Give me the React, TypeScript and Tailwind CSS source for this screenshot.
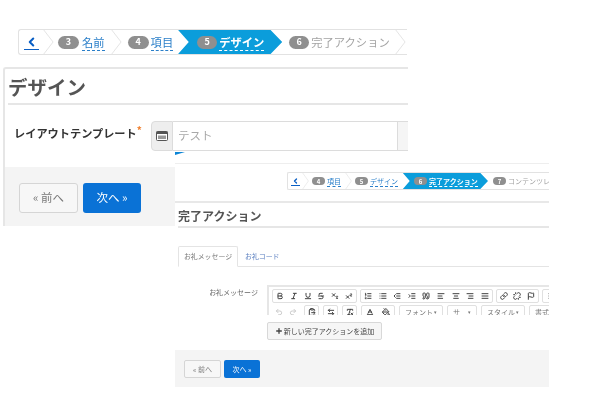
import {
  AlignCenter,
  AlignJustify,
  AlignLeft,
  AlignRight,
  ArrowLeftRight,
  Baseline,
  Bold,
  ChevronLeft,
  ClipboardPaste,
  Flag,
  Indent,
  Italic,
  Link,
  List,
  ListOrdered,
  Outdent,
  PaintBucket,
  Plus,
  Quote,
  Redo2,
  RemoveFormatting,
  Strikethrough,
  Subscript,
  Superscript,
  Underline,
  Undo2,
  Unlink,
} from "lucide-react";
import type { ComponentType } from "react";

const FONT = "font-['Noto_Sans_CJK_JP','Noto_Sans',sans-serif]";

type IconType = ComponentType<{ size?: number; strokeWidth?: number; className?: string }>;

function Chevron({ className }: { className: string }) {
  return (
    <svg className={className} viewBox="0 0 12 26" fill="none" preserveAspectRatio="none">
      <path d="M0 0 L11 13 L0 26" stroke="#e3e3e3" strokeWidth="1" />
    </svg>
  );
}

function LargeSteps() {
  return (
    <div className="ml-[18px] flex h-[26px] w-[389px] items-center overflow-hidden rounded-l-[3px] border-y border-l border-[#e2e2e2] text-[11.3px]">
      <div className="flex w-[24px] shrink-0 justify-center">
        <ChevronLeft size={15} strokeWidth={3.5} className="border-b border-[#0a5fc4] text-[#0a5fc4]" />
      </div>
      <Chevron className="h-[26px] w-[11px] shrink-0" />
      <div className="ml-[4px] flex shrink-0 items-center">
        <span className="mr-[3px] flex h-[13px] w-[21px] items-center justify-center rounded-full bg-[#8f8f8f] text-[9px] font-bold text-white">3</span>
        <span className="border-b border-dashed border-[#2a7fc9] leading-[16px] text-[#2a7fc9]">名前</span>
      </div>
      <Chevron className="ml-[6px] h-[26px] w-[11px] shrink-0" />
      <div className="ml-[6px] flex shrink-0 items-center">
        <span className="mr-[2px] flex h-[13px] w-[21px] items-center justify-center rounded-full bg-[#8f8f8f] text-[9px] font-bold text-white">4</span>
        <span className="border-b border-dashed border-[#2a7fc9] leading-[16px] text-[#2a7fc9]">項目</span>
      </div>
      <div className="ml-[4px] flex h-[26px] w-[105px] shrink-0 items-center bg-[#0b9ddb] pl-[20px] [clip-path:polygon(0_0,88%_0,100%_50%,88%_100%,0_100%,11%_50%)]">
        <span className="mr-[2px] flex h-[13px] w-[20px] items-center justify-center rounded-full bg-[#8f8f8f] text-[9px] font-bold text-white">5</span>
        <span className="border-b border-dashed border-white font-bold leading-[16px] text-white">デザイン</span>
      </div>
      <div className="ml-[7px] flex shrink-0 items-center">
        <span className="mr-[2px] flex h-[13px] w-[20px] items-center justify-center rounded-full bg-[#8f8f8f] text-[9px] font-bold text-white">6</span>
        <span className="whitespace-nowrap leading-[16px] text-[#a3a3a3]">完了アクション</span>
      </div>
      <Chevron className="ml-[5px] h-[26px] w-[11px] shrink-0" />
    </div>
  );
}

function SmallSteps() {
  return (
    <div className="ml-[112px] flex h-[18px] w-[262px] items-center overflow-hidden rounded-l-[2px] border-y border-l border-[#e2e2e2] text-[7px]">
      <div className="flex w-[14px] shrink-0 justify-center">
        <ChevronLeft size={9} strokeWidth={4} className="border-b border-[#0a5fc4] text-[#0a5fc4]" />
      </div>
      <Chevron className="h-[18px] w-[7px] shrink-0" />
      <div className="ml-[3px] flex shrink-0 items-center">
        <span className="mr-[2px] flex h-[8px] w-[13px] items-center justify-center rounded-full bg-[#8f8f8f] text-[6px] font-bold text-white">4</span>
        <span className="border-b border-dashed border-[#2a7fc9] leading-[10px] text-[#2a7fc9]">項目</span>
      </div>
      <Chevron className="ml-[4px] h-[18px] w-[7px] shrink-0" />
      <div className="ml-[3px] flex shrink-0 items-center">
        <span className="mr-[2px] flex h-[8px] w-[13px] items-center justify-center rounded-full bg-[#8f8f8f] text-[6px] font-bold text-white">5</span>
        <span className="border-b border-dashed border-[#2a7fc9] leading-[10px] text-[#2a7fc9]">デザイン</span>
      </div>
      <div className="ml-[4px] flex h-[18px] w-[86px] shrink-0 items-center bg-[#0b9ddb] pl-[12px] [clip-path:polygon(0_0,90%_0,100%_50%,90%_100%,0_100%,9%_50%)]">
        <span className="mr-[2px] flex h-[8px] w-[13px] items-center justify-center rounded-full bg-[#8f8f8f] text-[6px] font-bold text-white">6</span>
        <span className="whitespace-nowrap border-b border-dashed border-white font-bold leading-[10px] text-white">完了アクション</span>
      </div>
      <div className="ml-[5px] flex shrink-0 items-center">
        <span className="mr-[2px] flex h-[8px] w-[13px] items-center justify-center rounded-full bg-[#8f8f8f] text-[6px] font-bold text-white">7</span>
        <span className="whitespace-nowrap leading-[10px] text-[#a3a3a3]">コンテンツレ</span>
      </div>
    </div>
  );
}

function ToolGroup({ icons, className }: { icons: IconType[]; className: string }) {
  return (
    <div className={`flex h-[14px] shrink-0 items-center justify-around rounded-[2px] border border-[#e0e0e0] bg-white ${className}`}>
      {icons.map((Icon, i) => (
        <Icon key={i} size={8} strokeWidth={3} className="text-[#444]" />
      ))}
    </div>
  );
}

function ToolSelect({ label, className }: { label: string; className: string }) {
  return (
    <div className={`flex h-[14px] shrink-0 items-center justify-between rounded-[2px] border border-[#e0e0e0] bg-white px-[5px] text-[7px] text-[#777] ${className}`}>
      <span className="whitespace-nowrap">{label}</span>
      <span className="text-[5px]">▾</span>
    </div>
  );
}

function Toolbar() {
  return (
    <div className="ml-[9px] h-[30px] w-[282px] overflow-hidden border-l-2 border-t-2 border-[#e6e6e6] pl-[3px] pt-[2px]">
      <div className="flex w-[300px] gap-[3px]">
        <ToolGroup icons={[Bold, Italic, Underline, Strikethrough, Subscript, Superscript]} className="w-[85px]" />
        <ToolGroup
          icons={[ListOrdered, List, Outdent, Indent, Quote, AlignLeft, AlignCenter, AlignRight, AlignJustify]}
          className="w-[133px]"
        />
        <ToolGroup icons={[Link, Unlink, Flag]} className="w-[43px]" />
        <ToolGroup icons={[List]} className="w-[20px]" />
      </div>
      <div className="mt-[2px] flex w-[300px] gap-[4px]">
        <div className="flex w-[28px] shrink-0 items-center justify-around">
          <Undo2 size={8} strokeWidth={3} className="text-[#ccc]" />
          <Redo2 size={8} strokeWidth={3} className="text-[#ccc]" />
        </div>
        <ToolGroup icons={[ClipboardPaste]} className="w-[15px]" />
        <ToolGroup icons={[ArrowLeftRight]} className="w-[15px]" />
        <ToolGroup icons={[RemoveFormatting]} className="w-[15px]" />
        <ToolGroup icons={[Baseline, PaintBucket]} className="w-[34px]" />
        <ToolSelect label="フォント" className="w-[44px]" />
        <ToolSelect label="サ" className="w-[30px]" />
        <ToolSelect label="スタイル" className="w-[44px]" />
        <ToolSelect label="書式" className="w-[24px]" />
      </div>
    </div>
  );
}

function DesignPanel() {
  return (
    <section className="absolute left-0 top-[15px] h-[211px] w-[408px] overflow-hidden bg-white pt-[14px]">
      <LargeSteps />
      <div className="ml-[3px] mt-[12px] rounded-tl-[3px] border-l-2 border-t-2 border-[#e6e6e6]">
        <h1 className="ml-[3px] h-[36px] border-b-2 border-[#e6e6e6] pt-[4px] text-[19.5px] font-bold leading-[28px] text-[#555]">デザイン</h1>
        <div className="ml-[9px] mt-[16px] flex h-[30px]">
          <label className="flex w-[138px] items-start whitespace-nowrap pt-[3px] text-[11.2px] font-bold leading-[18px] text-[#333]">
            レイアウトテンプレート
            <span className="text-[10px] leading-[12px] text-[#f08030]">*</span>
          </label>
          <div className="flex w-[22px] shrink-0 items-center justify-center rounded-l-[4px] border border-[#dcdcdc] bg-[#eeeeee]">
            <svg width="12" height="10" viewBox="0 0 12 10">
              <rect x="0.5" y="0.5" width="11" height="9" rx="1" fill="#fff" stroke="#555" />
              <rect x="0.5" y="0.5" width="11" height="2.5" fill="#555" />
              <rect x="2" y="4.5" width="8" height="3.5" fill="#999" />
            </svg>
          </div>
          <div className="flex w-[225px] shrink-0 items-center border-y border-r border-[#dcdcdc] pl-[5px] text-[11.5px] text-[#a8a8a8]">テスト</div>
          <div className="w-[10px] grow border-y border-[#dcdcdc] bg-[#f5f5f5]" />
        </div>
        <div className="mt-[16px] flex h-[60px] gap-[5px] bg-[#f4f4f4] pl-[14px] pt-[16px]">
          <button className="h-[30px] w-[59px] rounded-[3px] border border-[#d5d5d5] bg-[#f7f7f7] text-[11.5px] text-[#777]">« 前へ</button>
          <button className="h-[30px] w-[58px] rounded-[3px] bg-[#0a72d6] text-[11.5px] text-white">次へ »</button>
        </div>
      </div>
    </section>
  );
}

function ActionPanel() {
  return (
    <section className="absolute left-[175px] top-[152px] h-[236px] w-[374px] overflow-hidden bg-white">
      <div className="h-[3px] w-[10px] bg-[#0b85d6] [clip-path:polygon(0_0,100%_0,0_100%)]" />
      <div className="mt-[8px] h-px bg-[#eeeeee]" />
      <div className="mt-[8px]">
        <SmallSteps />
      </div>
      <div className="mt-[11px] h-[2px] bg-[#e8e8e8]" />
      <h2 className="ml-[3px] h-[25px] border-b-2 border-[#e6e6e6] pt-[3px] text-[12px] font-bold leading-[20px] text-[#555]">完了アクション</h2>
      <div className="ml-[3px] mt-[18px] flex h-[21px] border-b border-[#e4e4e4] text-[6.9px]">
        <div className="flex h-[21px] w-[60px] items-center justify-center whitespace-nowrap rounded-t-[2px] border border-[#e4e4e4] border-b-white bg-white text-[#777]">お礼メッセージ</div>
        <div className="ml-[7px] flex items-center whitespace-nowrap text-[#5a7fc0]">お礼コード</div>
      </div>
      <div className="mt-[18px] flex">
        <div className="w-[83px] pt-[1px] text-right text-[7px] leading-[12px] text-[#666]">お礼メッセージ</div>
        <Toolbar />
      </div>
      <button className="ml-[92px] mt-[7px] flex h-[18px] w-[115px] items-center justify-center gap-[1px] whitespace-nowrap rounded-[2px] border border-[#d8d8d8] bg-[#f6f6f6] text-[7px] text-[#444]">
        <Plus size={8} strokeWidth={4} />
        新しい完了アクションを追加
      </button>
      <div className="mt-[10px] flex h-[37px] gap-[3px] bg-[#f4f4f4] pl-[9px] pt-[10px]">
        <button className="h-[18px] w-[37px] rounded-[2px] border border-[#d5d5d5] bg-[#f7f7f7] text-[7px] text-[#777]">« 前へ</button>
        <button className="h-[18px] w-[36px] rounded-[2px] bg-[#0a72d6] text-[7px] text-white">次へ »</button>
      </div>
    </section>
  );
}

export default function App() {
  return (
    <div className={`relative h-[405px] w-[601px] overflow-hidden bg-white ${FONT} blur-[0.35px]`}>
      <DesignPanel />
      <ActionPanel />
    </div>
  );
}
